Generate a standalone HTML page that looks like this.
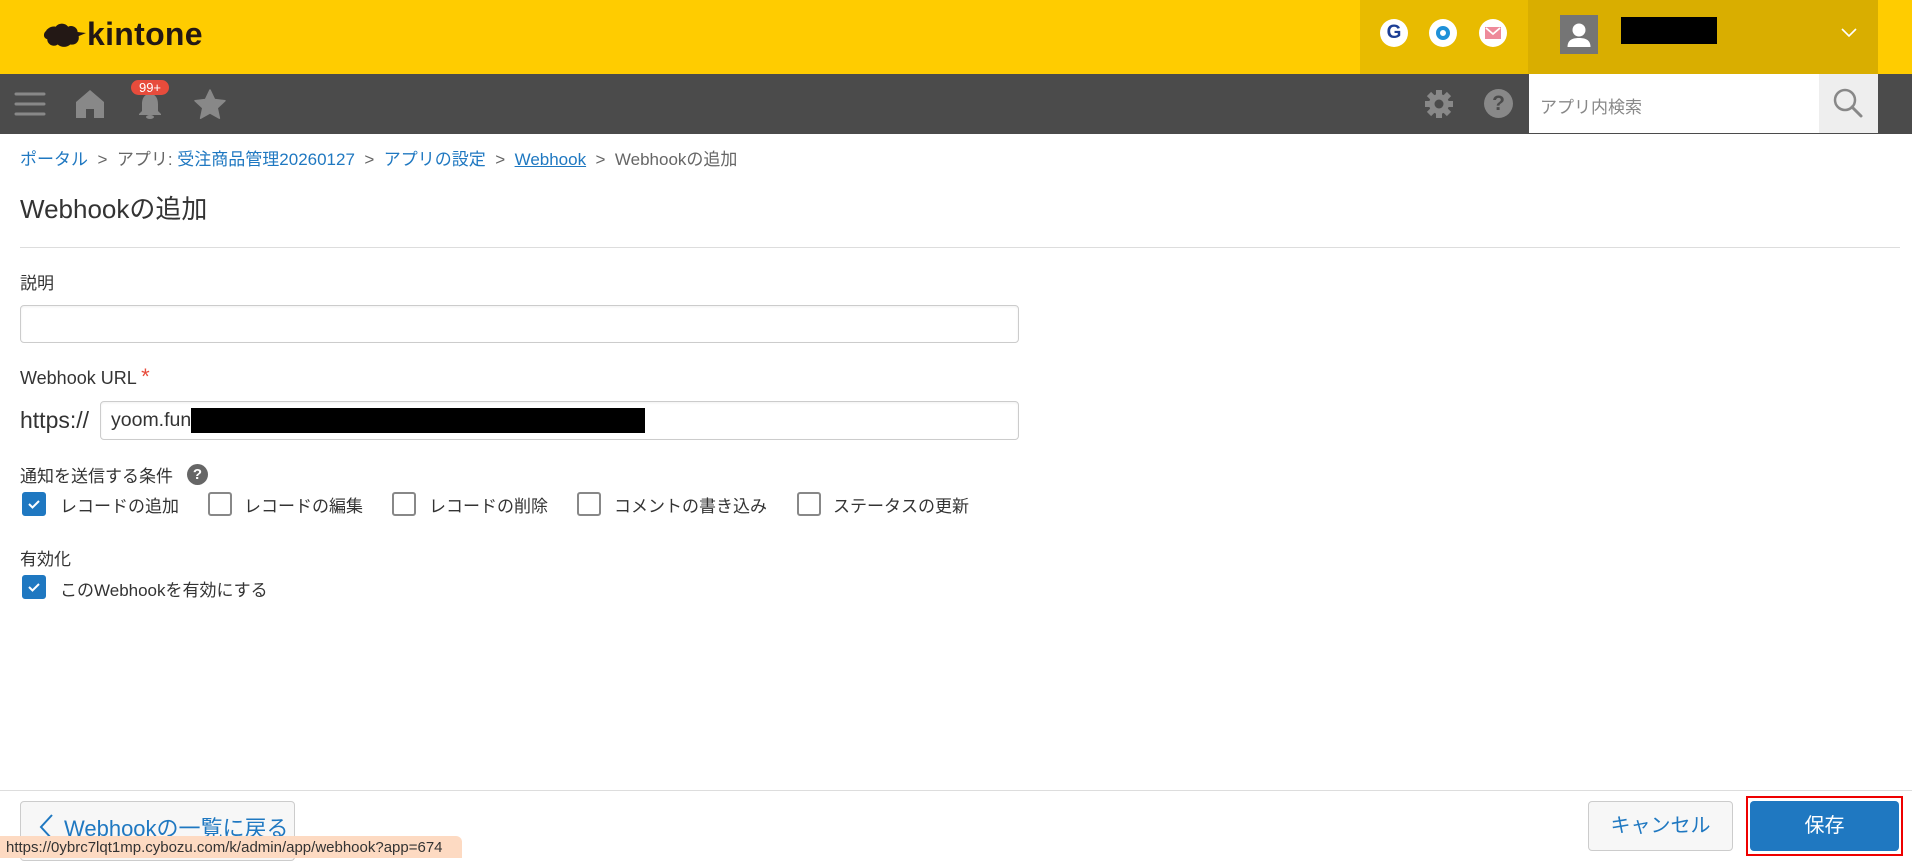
<!DOCTYPE html>
<html><head><meta charset="utf-8"><style>
*{box-sizing:border-box;margin:0;padding:0}
body{width:1912px;height:856px;overflow:hidden;background:#fff;font-family:"Liberation Sans","Noto Sans CJK JP",sans-serif;color:#333;position:relative}
.a{position:absolute}
.lbl{font-size:17px;color:#333}
.cb{position:absolute;width:24px;height:24px;border:2px solid #888;border-radius:3px;background:#fff}
.cb.on{background:#1f78c1;border-color:#1f78c1}
.cbt{position:absolute;font-size:17px;color:#333}
.inp{position:absolute;border:1px solid #ccc;border-radius:4px;background:#fff;box-shadow:inset 0 1px 2px rgba(0,0,0,.06)}
</style></head><body>
<div class="a" style="left:0;top:0;width:1912px;height:74px;background:#ffcc00"></div>
<div class="a" style="left:1360px;top:0;width:168px;height:74px;background:#e8bb00"></div>
<div class="a" style="left:1528px;top:0;width:350px;height:74px;background:#d9ae00"></div>
<svg class="a" style="left:42px;top:16px" width="44" height="34" viewBox="0 2 42 28"><path d="M4 14c-3 2-3 7 1 8c0 5 6 8 10 5c3 3 9 3 12 0c5 1 9-3 8-8l7-3l-8-1c0-4-5-7-9-5c-3-4-9-4-12 0c-5-1-9 3-9 4z" fill="#231815"/></svg>
<div class="a" style="left:87px;top:16px;font-size:32px;font-weight:bold;color:#231815;letter-spacing:0.3px">kintone</div>
<div class="a" style="left:1380px;top:19px;width:28px;height:28px;border-radius:50%;background:#fff;text-align:center;font:bold 19px/28px 'Liberation Sans';color:#1d3f95">G</div>
<div class="a" style="left:1429px;top:19px;width:28px;height:28px;border-radius:50%;background:#fff"><div class="a" style="left:7px;top:7px;width:14px;height:14px;border-radius:50%;border:4px solid #1f91d8"></div></div>
<div class="a" style="left:1479px;top:19px;width:28px;height:28px;border-radius:50%;background:#fff"><svg class="a" style="left:6px;top:8px" width="16" height="12"><rect width="16" height="12" fill="#ee8a9a"/><path d="M1 1l7 6l7-6" stroke="#fff" stroke-width="1.8" fill="none"/></svg></div>
<div class="a" style="left:1560px;top:15px;width:38px;height:39px;background:#757575"><svg width="38" height="39"><circle cx="19" cy="15" r="6.5" fill="#fff"/><path d="M7.5 32c0-7 5-9 11.5-9s11.5 2 11.5 9z" fill="#fff"/></svg></div>
<div class="a" style="left:1621px;top:17px;width:96px;height:27px;background:#000"></div>
<svg class="a" style="left:1841px;top:28px" width="16" height="10"><path d="M1 1l7 7l7-7" stroke="#fff" stroke-width="1.6" fill="none"/></svg>

<div class="a" style="left:0;top:74px;width:1912px;height:60px;background:#4b4b4b"></div>
<svg class="a" style="left:14px;top:91px" width="32" height="26"><g stroke="#888" stroke-width="3" stroke-linecap="round"><path d="M2 3h28M2 13h28M2 23h28"/></g></svg>
<svg class="a" style="left:75px;top:89px" width="30" height="30"><path d="M15 1L1 13v16h10v-9h8v9h10V13z" fill="#888"/></svg>
<svg class="a" style="left:135px;top:92px" width="30" height="28"><path d="M15 2c-6 0-8 5-8 10v7l-3 3v1h22v-1l-3-3v-7c0-5-2-10-8-10z" fill="#888"/><ellipse cx="15" cy="25" rx="4" ry="2" fill="#888"/></svg>
<div class="a" style="left:131px;top:80px;width:38px;height:15px;border-radius:8px;background:#e74c3c;color:#fff;font-size:13px;line-height:15px;text-align:center">99+</div>
<svg class="a" style="left:194px;top:89px" width="32" height="30"><path d="M16 1l4.5 9.5 10.5 1.2-7.8 7.2 2.2 10.3L16 24l-9.4 5.2 2.2-10.3L1 11.7l10.5-1.2z" fill="#888" stroke="#888" stroke-linejoin="round" stroke-width="1.5"/></svg>
<svg class="a" style="left:1423px;top:88px" width="32" height="32" viewBox="0 0 32 32"><g fill="#888"><circle cx="16" cy="16" r="10"/><g stroke="#888" stroke-width="6"><path d="M16 2v28M2 16h28M6 6l20 20M26 6L6 26"/></g></g><circle cx="16" cy="16" r="4.5" fill="#4b4b4b"/></svg>
<div class="a" style="left:1484px;top:89px;width:29px;height:29px;border-radius:50%;background:#888;color:#4b4b4b;font:bold 21px/29px 'Liberation Sans';text-align:center">?</div>
<div class="a" style="left:1529px;top:74px;width:290px;height:59px;background:#fff"></div>
<div class="a" style="left:1540px;top:93px;font-size:17px;color:#888">アプリ内検索</div>
<div class="a" style="left:1819px;top:74px;width:59px;height:59px;background:#eee"></div>
<svg class="a" style="left:1831px;top:87px" width="34" height="34"><circle cx="14" cy="13" r="10" stroke="#888" stroke-width="2.5" fill="none"/><path d="M21 20l9 9" stroke="#888" stroke-width="3" stroke-linecap="round"/></svg>

<div class="a" style="top:145px;left:20px;font-size:17px;color:#666;white-space:nowrap"><span style="color:#1f78c1">ポータル</span>&nbsp;&nbsp;&gt;&nbsp;&nbsp;アプリ: <span style="color:#1f78c1">受注商品管理20260127</span>&nbsp;&nbsp;&gt;&nbsp;&nbsp;<span style="color:#1f78c1">アプリの設定</span>&nbsp;&nbsp;&gt;&nbsp;&nbsp;<span style="color:#1f78c1;text-decoration:underline">Webhook</span>&nbsp;&nbsp;&gt;&nbsp;&nbsp;Webhookの追加</div>
<div class="a" style="top:189px;left:20px;font-size:26px;color:#333">Webhookの追加</div>
<div class="a" style="top:247px;left:20px;width:1880px;height:1px;background:#ddd"></div>
<div class="a lbl" style="top:269px;left:20px">説明</div>
<div class="inp" style="left:20px;top:305px;width:999px;height:38px"></div>
<div class="a" style="top:364px;left:20px;font-size:18px">Webhook URL <span style="color:#e74c3c;font-size:22px">*</span></div>
<div class="a" style="top:407px;left:20px;font-size:23px;color:#333">https://</div>
<div class="inp" style="left:100px;top:401px;width:919px;height:39px"></div>
<div class="a" style="top:409px;left:111px;font-size:19.5px;color:#333">yoom.fun</div>
<div class="a" style="left:191px;top:408px;width:454px;height:25px;background:#000"></div>
<div class="a lbl" style="top:462px;left:20px">通知を送信する条件</div>
<div class="a" style="left:187px;top:464px;width:21px;height:21px;border-radius:50%;background:#666;color:#fff;font:bold 15px/21px 'Liberation Sans';text-align:center">?</div>
<div class="cb on" style="left:22px;top:492px"><svg width="20" height="20"><path d="M5 10l3.5 3.5L15 7" stroke="#fff" stroke-width="2" fill="none"/></svg></div>
<div class="cbt" style="left:60px;top:492px">レコードの追加</div>
<div class="cb" style="left:208px;top:492px"></div><div class="cbt" style="left:244px;top:492px">レコードの編集</div>
<div class="cb" style="left:392px;top:492px"></div><div class="cbt" style="left:429px;top:492px">レコードの削除</div>
<div class="cb" style="left:577px;top:492px"></div><div class="cbt" style="left:614px;top:492px">コメントの書き込み</div>
<div class="cb" style="left:797px;top:492px"></div><div class="cbt" style="left:833px;top:492px">ステータスの更新</div>
<div class="a lbl" style="top:545px;left:20px">有効化</div>
<div class="cb on" style="left:22px;top:575px"><svg width="20" height="20"><path d="M5 10l3.5 3.5L15 7" stroke="#fff" stroke-width="2" fill="none"/></svg></div>
<div class="cbt" style="left:60px;top:576px">このWebhookを有効にする</div>

<div class="a" style="top:790px;left:0;width:1912px;height:1px;background:#ddd"></div>
<div class="a" style="left:20px;top:801px;width:275px;height:60px;border:1px solid #ccc;border-radius:4px;background:#f7f7f7"></div>
<svg class="a" style="left:38px;top:813px" width="18" height="30"><path d="M14 2L3 14l11 12" stroke="#1f78c1" stroke-width="2" fill="none"/></svg>
<div class="a" style="left:64px;top:811px;font-size:22px;color:#1f78c1">Webhookの一覧に戻る</div>
<div class="a" style="left:1588px;top:801px;width:145px;height:50px;border:1px solid #ccc;border-radius:4px;background:#f7f7f7;text-align:center;font-size:20px;line-height:48px;color:#1f78c1">キャンセル</div>
<div class="a" style="left:1746px;top:796px;width:157px;height:60px;border:2px solid #e00"></div>
<div class="a" style="left:1750px;top:801px;width:149px;height:50px;border-radius:4px;background:#1f78c1;text-align:center;font-size:20px;line-height:50px;color:#fff">保存</div>
<div class="a" style="left:0;top:836px;width:462px;height:22px;background:#fddac2;border-radius:0 6px 0 0;font-size:15px;line-height:24px;padding-left:6px;color:#333;white-space:nowrap;overflow:hidden">https://0ybrc7lqt1mp.cybozu.com/k/admin/app/webhook?app=674</div>
</body></html>
